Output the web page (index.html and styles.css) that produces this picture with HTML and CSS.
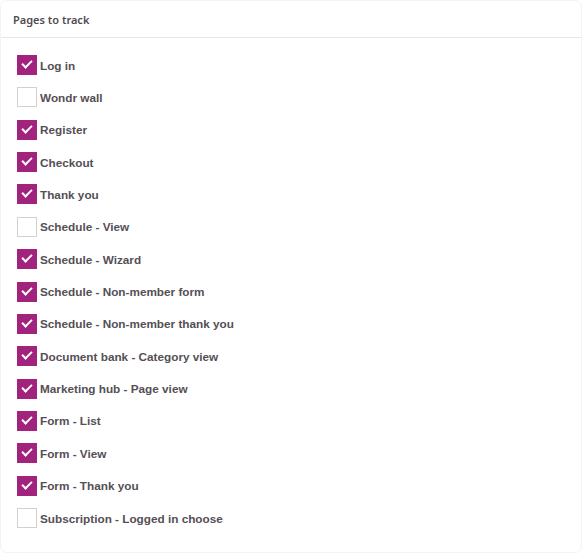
FILE: index.html
```html
<!DOCTYPE html>
<html lang="en">
<head>
    <meta charset="UTF-8">
    <title>Pages to track</title>
    <link rel="stylesheet" href="styles.css">
</head>
<body>
    <!-- Tracking card -->
    <div class="card">
        <div class="card-header">Pages to track</div>
        <div class="card-body">
            <label class="check-row"><span class="box checked"></span>Log in</label>
            <label class="check-row"><span class="box"></span>Wondr wall</label>
            <label class="check-row"><span class="box checked"></span>Register</label>
            <label class="check-row"><span class="box checked"></span>Checkout</label>
            <label class="check-row"><span class="box checked"></span>Thank you</label>
            <label class="check-row"><span class="box"></span>Schedule - View</label>
            <label class="check-row"><span class="box checked"></span>Schedule - Wizard</label>
            <label class="check-row"><span class="box checked"></span>Schedule - Non-member form</label>
            <label class="check-row"><span class="box checked"></span>Schedule - Non-member thank you</label>
            <label class="check-row"><span class="box checked"></span>Document bank - Category view</label>
            <label class="check-row"><span class="box checked"></span>Marketing hub - Page view</label>
            <label class="check-row"><span class="box checked"></span>Form - List</label>
            <label class="check-row"><span class="box checked"></span>Form - View</label>
            <label class="check-row"><span class="box checked"></span>Form - Thank you</label>
            <label class="check-row"><span class="box"></span>Subscription - Logged in choose</label>
        </div>
    </div>
</body>
</html>
```

FILE: styles.css
```css
body, html {
    margin: 0;
    padding: 0;
    background: #fff;
}

.card {
    box-sizing: border-box;
    width: 582px;
    height: 553px;
    border: 1px solid #f3f3f3;
    border-radius: 7px;
    background: #fff;
}

.card-header {
    height: 36px;
    padding: 0 12px;
    display: flex;
    align-items: center;
    border-bottom: 1px solid #e6e6e6;
    font-family: 'Noto Sans', sans-serif;
    font-weight: 600;
    font-size: 11px;
    color: #514b51;
}

.card-body {
    display: flex;
    flex-direction: column;
    gap: 12.36px;
    padding: 17px 16px;
}

.check-row {
    display: flex;
    align-items: center;
    gap: 3px;
    height: 20px;
    font-family: 'Liberation Sans', Arial, sans-serif;
    font-weight: bold;
    font-size: 11.75px;
    color: #554f55;
}

.box {
    box-sizing: border-box;
    width: 20px;
    height: 20px;
    border: 1px solid #d4d0cc;
    background: #fff;
    position: relative;
}

.box.checked {
    border: none;
    background: #a1237e;
}

.box.checked::after {
    content: '';
    position: absolute;
    left: 5px;
    top: 5px;
    width: 8px;
    height: 4px;
    border-left: 2.5px solid #fff;
    border-bottom: 2.5px solid #fff;
    transform: rotate(-45deg);
}
```
